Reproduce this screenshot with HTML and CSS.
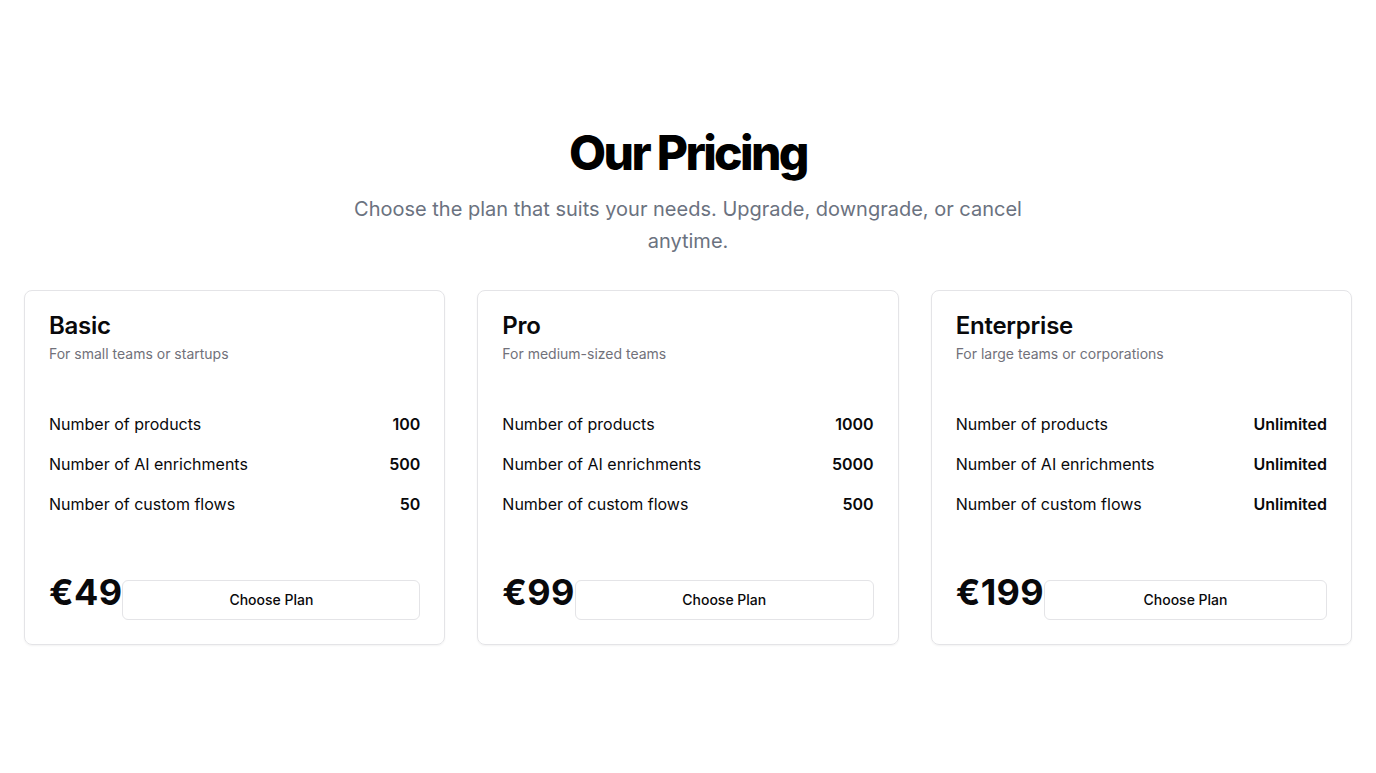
FILE: index.html
```html
<!DOCTYPE html>
<html lang="en">
<head>
<meta charset="utf-8">
<title>Our Pricing</title>
<link rel="stylesheet" href="styles.css">
</head>
<body>
<section class="pricing">
  <h1 class="heading">Our Pricing</h1>
  <p class="lead">Choose the plan that suits your needs. Upgrade, downgrade, or cancel anytime.</p>
  <div class="plans">
    <div class="card">
      <div class="card-head">
        <h2 class="plan-name">Basic</h2>
        <p class="plan-desc">For small teams or startups</p>
      </div>
      <ul class="features">
        <li class="feature"><span>Number of products</span><span class="val">100</span></li>
        <li class="feature"><span>Number of AI enrichments</span><span class="val">500</span></li>
        <li class="feature"><span>Number of custom flows</span><span class="val">50</span></li>
      </ul>
      <div class="card-foot">
        <span class="price">€49</span>
        <button class="choose">Choose Plan</button>
      </div>
    </div>
    <div class="card">
      <div class="card-head">
        <h2 class="plan-name">Pro</h2>
        <p class="plan-desc">For medium-sized teams</p>
      </div>
      <ul class="features">
        <li class="feature"><span>Number of products</span><span class="val">1000</span></li>
        <li class="feature"><span>Number of AI enrichments</span><span class="val">5000</span></li>
        <li class="feature"><span>Number of custom flows</span><span class="val">500</span></li>
      </ul>
      <div class="card-foot">
        <span class="price">€99</span>
        <button class="choose">Choose Plan</button>
      </div>
    </div>
    <div class="card">
      <div class="card-head">
        <h2 class="plan-name">Enterprise</h2>
        <p class="plan-desc">For large teams or corporations</p>
      </div>
      <ul class="features">
        <li class="feature"><span>Number of products</span><span class="val">Unlimited</span></li>
        <li class="feature"><span>Number of AI enrichments</span><span class="val">Unlimited</span></li>
        <li class="feature"><span>Number of custom flows</span><span class="val">Unlimited</span></li>
      </ul>
      <div class="card-foot">
        <span class="price">€199</span>
        <button class="choose">Choose Plan</button>
      </div>
    </div>
  </div>
</section>
</body>
</html>
```
FILE: styles.css
```css
* { box-sizing: border-box; }
html, body { margin: 0; padding: 0; background: #fff; }
body {
  font-family: Inter, "Noto Sans", "Liberation Sans", sans-serif;
  color: #09090b;
}
.pricing {
  min-height: 100vh;
  display: flex;
  flex-direction: column;
  align-items: center;
  justify-content: center;
  padding: 0 24px;
}
.heading {
  margin: 0;
  font-size: 48px;
  line-height: 48px;
  font-weight: 800;
  letter-spacing: -0.055em;
  color: #000;
}
.lead {
  margin: 16px 0 0;
  max-width: 672px;
  text-align: center;
  font-size: 20px;
  line-height: 32.5px;
  color: #6b7280;
}
.plans {
  margin-top: 32px;
  width: 100%;
  display: grid;
  grid-template-columns: repeat(3, 1fr);
  gap: 32px;
}
.card {
  border: 1px solid #e4e4e7;
  border-radius: 8px;
  box-shadow: 0 1px 2px rgba(0,0,0,0.05);
  padding: 23px 24px 24px;
  display: flex;
  flex-direction: column;
}
.plan-name {
  margin: 0;
  font-size: 24px;
  line-height: 24px;
  font-weight: 600;
  letter-spacing: -0.01em;
}
.plan-desc {
  margin: 6px 0 0;
  font-size: 14px;
  line-height: 20px;
  color: #71717a;
}
.features {
  list-style: none;
  margin: 48px 0 0;
  padding: 0;
  display: flex;
  flex-direction: column;
  gap: 16px;
}
.feature {
  display: flex;
  justify-content: space-between;
  font-size: 16px;
  line-height: 24px;
}
.val { font-weight: 600; }
.card-foot {
  margin-top: 56px;
  display: flex;
  align-items: baseline;
}
.price {
  font-size: 36px;
  line-height: 40px;
  font-weight: 700;
  letter-spacing: 0.01em;
}
.choose {
  flex: 1;
  height: 40px;
  display: flex;
  align-items: center;
  justify-content: center;
  background: #fff;
  border: 1px solid #e4e4e7;
  border-radius: 6px;
  font-family: inherit;
  font-size: 14px;
  line-height: 20px;
  font-weight: 500;
  color: #09090b;
  cursor: pointer;
}
```
